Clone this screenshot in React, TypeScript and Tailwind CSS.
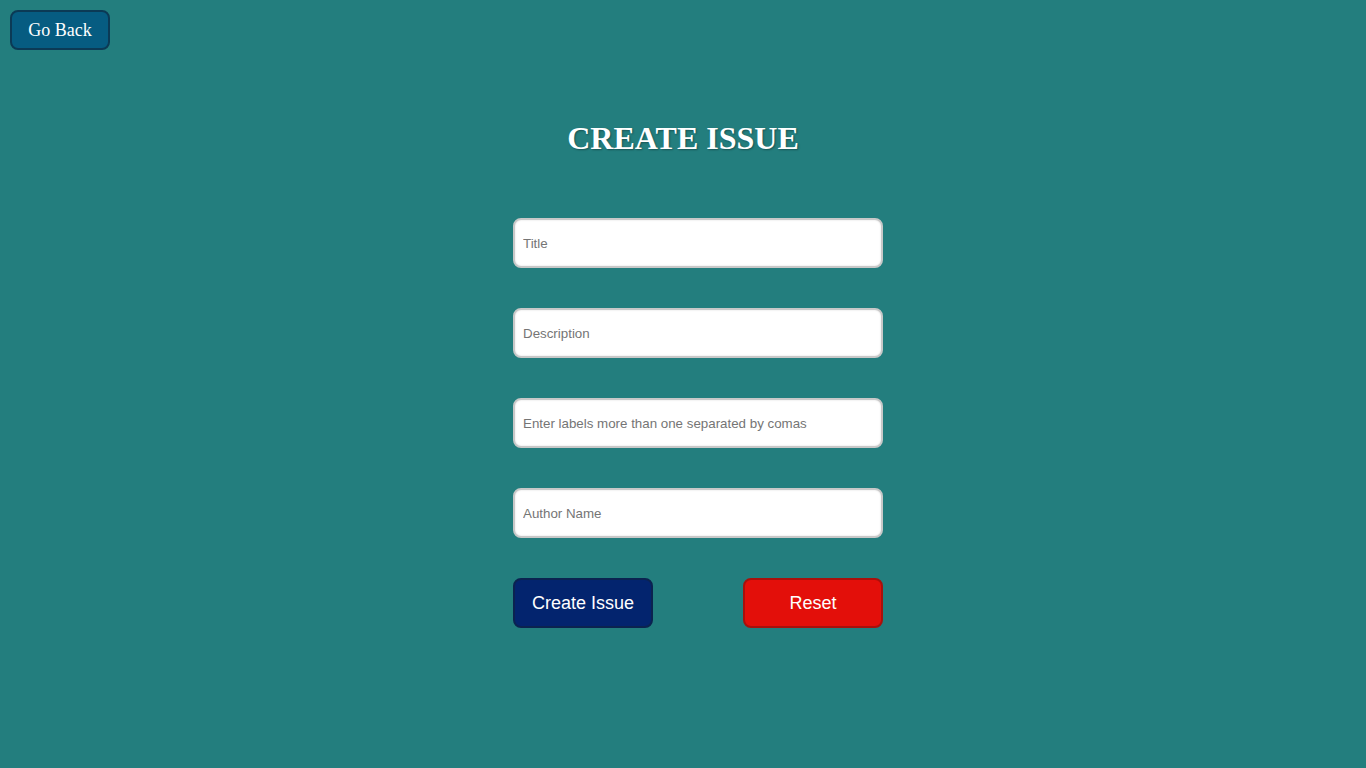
import { useState } from "react";

const fields = [
  { name: "title", placeholder: "Title" },
  { name: "description", placeholder: "Description" },
  { name: "labels", placeholder: "Enter labels more than one separated by comas" },
  { name: "author", placeholder: "Author Name" },
];

const emptyForm = { title: "", description: "", labels: "", author: "" };

export default function App() {
  const [form, setForm] = useState<Record<string, string>>(emptyForm);

  const handleChange = (e: React.ChangeEvent<HTMLInputElement>) => {
    const { name, value } = e.target;
    setForm({ ...form, [name]: value });
  };

  return (
    <div className="min-h-screen w-full bg-[#237e7e] font-['Liberation_Serif',serif]">
      <div className="p-[10px]">
        <button className="h-10 w-[100px] rounded-lg border-2 border-[#0b3a55] bg-[#065c81] text-lg text-white">
          Go Back
        </button>
      </div>

      <h1 className="mt-[54px] text-center text-[32px] font-bold text-white [text-shadow:1px_1px_2px_rgba(0,0,0,0.35)]">
        CREATE ISSUE
      </h1>

      <form
        autoComplete="off"
        onSubmit={(e) => e.preventDefault()}
        className="mx-auto mt-[56px] flex w-[400px] flex-col gap-10 pl-[30px] font-['Liberation_Sans',Arial,sans-serif]"
      >
        {fields.map((f) => (
          <input
            key={f.name}
            type="text"
            name={f.name}
            value={form[f.name]}
            onChange={handleChange}
            placeholder={f.placeholder}
            className="h-[50px] w-[370px] rounded-lg border-2 border-[#c8c8c8] bg-white px-2 text-[13.33px] text-gray-800 shadow-[inset_0_0_2px_rgba(0,0,0,0.15)] placeholder:text-[#757575] focus:outline-none"
          />
        ))}
        <div className="flex w-[370px] justify-between">
          <button
            type="submit"
            className="h-[50px] w-[140px] rounded-lg border-2 border-[#0b2350] bg-[#03246e] text-lg text-white"
          >
            Create Issue
          </button>
          <button
            type="button"
            onClick={() => setForm(emptyForm)}
            className="h-[50px] w-[140px] rounded-lg border-2 border-[#a8100c] bg-[#e30f0a] text-lg text-white"
          >
            Reset
          </button>
        </div>
      </form>
    </div>
  );
}
